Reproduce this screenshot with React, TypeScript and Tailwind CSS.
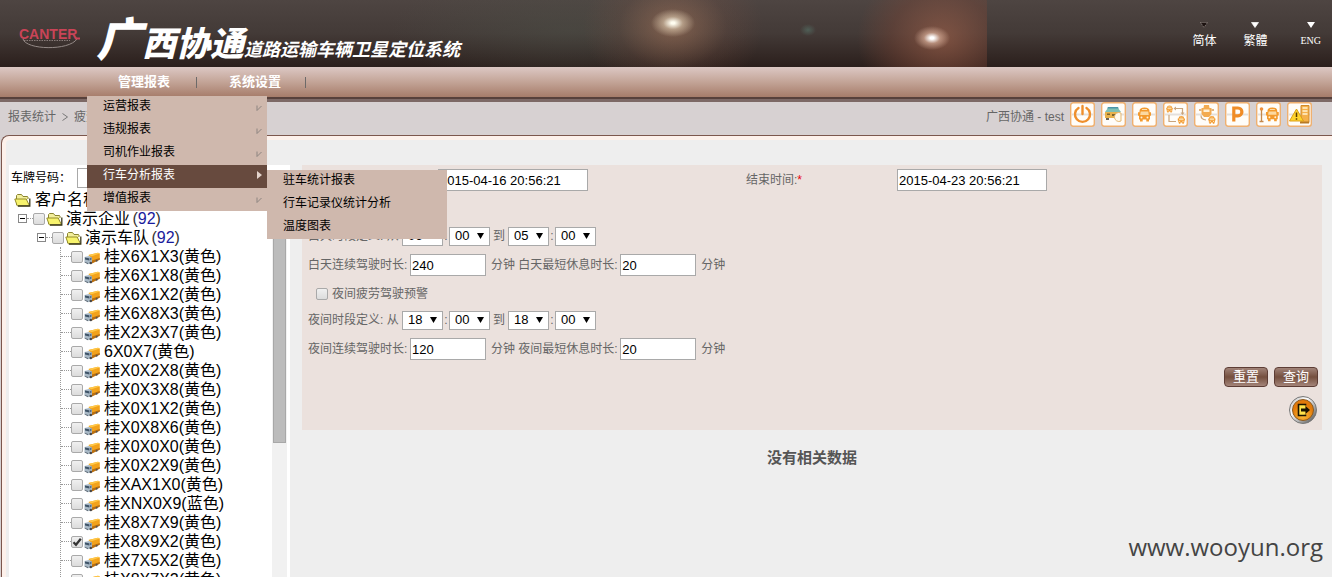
import React from "react";

const vehicles = [
  "桂X6X1X3(黄色)",
  "桂X6X1X8(黄色)",
  "桂X6X1X2(黄色)",
  "桂X6X8X3(黄色)",
  "桂X2X3X7(黄色)",
  "6X0X7(黄色)",
  "桂X0X2X8(黄色)",
  "桂X0X3X8(黄色)",
  "桂X0X1X2(黄色)",
  "桂X0X8X6(黄色)",
  "桂X0X0X0(黄色)",
  "桂X0X2X9(黄色)",
  "桂XAX1X0(黄色)",
  "桂XNX0X9(蓝色)",
  "桂X8X7X9(黄色)",
  "桂X8X9X2(黄色)",
  "桂X7X5X2(黄色)",
  "桂X8X7X2(黄色)",
];

const menuItems = ["运营报表", "违规报表", "司机作业报表", "行车分析报表", "增值报表"];
const subItems = ["驻车统计报表", "行车记录仪统计分析", "温度图表"];

function Check({ label, checked = false }: { label: string; checked?: boolean }) {
  return (
    <span className="relative flex size-3 shrink-0">
      <input
        type="checkbox"
        aria-label={label}
        defaultChecked={checked}
        className="peer size-3 appearance-none rounded-xs border border-[#a9a9a9] bg-linear-to-b from-[#f0f0f0] to-[#dcdcdc]"
      />
      <svg
        viewBox="0 0 12 12"
        className="pointer-events-none absolute inset-0 hidden size-3 peer-checked:block"
      >
        <path d="M2.5 6.2 5 8.8 9.8 2.8" fill="none" stroke="#333" strokeWidth="2.2" />
      </svg>
    </span>
  );
}

function Folder() {
  return (
    <svg viewBox="0 0 17 14" className="h-[14px] w-[17px] shrink-0">
      <path d="M2.5 12V2.5l1-1h4l1.5 2h4.500l.5.5V6" fill="#f3ef9c" stroke="#8a8430" />
      <path d="M.8 6h11.400L15.500 12.800H3.200z" fill="#f7f36c" stroke="#948c2a" />
      <path d="M15.800 5.500v7.500H4" fill="none" stroke="#3c3a1c" strokeWidth="1.300" />
    </svg>
  );
}

function Truck() {
  return (
    <svg viewBox="0 0 16 13" className="h-[13px] w-4 shrink-0">
      <path d="M4.500 3 14 .8l1.800.8v5.600L8 11 6 5z" fill="#f2a21c" />
      <path d="M4.500 3 14 .8l1.800.8L7.500 4.200z" fill="#ffc848" />
      <path d="M8 8.500 15.800 6v1.800L8 11.500z" fill="#b86e10" />
      <path d="M.5 5 5 4l3 1.400v5.600L4 12.200.5 10z" fill="#a9b9c6" />
      <path d="M1 5.600 5 6.200l.2 2.200L1 7.400z" fill="#3f5468" />
      <path d="m5.600 6.200 1.900-.6v2.200l-1.900.6z" fill="#5a6f82" />
      <path d="M.6 9.800 4 11v1.200L.6 10.600z" fill="#5f6b77" />
      <circle cx="6.800" cy="11" r="1.300" fill="#444" />
      <circle cx="12.600" cy="8.800" r="1" fill="#555" />
    </svg>
  );
}

function Toggle() {
  return (
    <button type="button" aria-label="折叠" className="size-[9px] shrink-0">
      <svg viewBox="0 0 9 9" className="size-[9px]">
        <rect x=".5" y=".5" width="8" height="8" fill="#fff" stroke="#888" />
        <path d="M2 4.500h5" stroke="#000" />
      </svg>
    </button>
  );
}

function Dots() {
  return <span className="w-[6px] shrink-0 border-t border-dotted border-[#999]" />;
}

function BusShape() {
  return (
    <>
      <path
        d="M2 3.500Q2 0 7 0t5 3.500v1.200h1.500v3.500H12.500V12h-1v2h-2.700v-2H5.200v2H2.500v-2h-1V8.200H.5V4.700H2z"
        fill="#f39a2e"
      />
      <path d="M4.500 1.500h5v1h-5z" fill="#fce0b4" />
      <path d="M3.200 4h7.600l.5 3.500H2.700z" fill="#fbd9a2" />
      <circle cx="4" cy="10" r="1" fill="#fff1d8" />
      <circle cx="10" cy="10" r="1" fill="#fff1d8" />
    </>
  );
}

const tools: { label: string; art: React.ReactNode }[] = [
  {
    label: "退出",
    art: (
      <g fill="none" stroke="#ef8f2c" strokeWidth="2.400" strokeLinecap="round">
        <path d="M8.500 6a7.500 7.500 0 1 0 8 0" />
        <path d="M12.500 4v8" />
      </g>
    ),
  },
  {
    label: "车辆查询",
    art: (
      <>
        <path d="m4 10 3-4h10l3 4z" fill="#7fc0b4" />
        <path d="M7 5h10l.8 1.500H6z" fill="#4a94a8" />
        <path d="M4 10h15v6H4z" fill="#e8b24c" />
        <path d="M6 11.500h3v1.500H6zM11 12h4v2h-4z" fill="#7a662f" />
        <path d="M5 16h3v2H5z" fill="#6b6455" />
        <path d="M20 11a4.500 4.500 0 1 0 0 8z" fill="#fff9ea" stroke="#e3b774" />
      </>
    ),
  },
  { label: "车辆", art: <g transform="translate(5.500 5.500)"><BusShape /></g> },
  {
    label: "线路",
    art: (
      <>
        <g transform="translate(3 3.500) scale(.5)"><BusShape /></g>
        <g transform="translate(14.500 14) scale(.55)"><BusShape /></g>
        <path d="M12 6.500h7.500V11M6 13v6.500h7" fill="none" stroke="#c9a47c" strokeWidth="1.200" />
        <path d="m17.500 10.500 2 2.500 2-2.500zM10.500 6.500l2.500-2v4z" fill="#c9a47c" />
      </>
    ),
  },
  {
    label: "跟踪",
    art: (
      <>
        <path d="M10 3h5l.5 3h2v6l-2.500 3h-5L7.500 12V6h2z" fill="#f3ab50" />
        <path d="M9.500 7.500h6V10h-6z" fill="#fff0d6" />
        <path d="M5 8h2.500M17.500 8H20" stroke="#d89a55" strokeWidth="1.500" />
        <path d="M7 13.500q0 4 5 4.500" fill="none" stroke="#c9a47c" strokeWidth="1.200" />
        <g transform="translate(14 14) scale(.55)"><BusShape /></g>
      </>
    ),
  },
  {
    label: "停车",
    art: (
      <path
        d="M8.800 19.500V6h4.200a3.900 3.900 0 0 1 0 7.800H8.800"
        fill="none"
        stroke="#f08c26"
        strokeWidth="3.200"
      />
    ),
  },
  {
    label: "站点",
    art: (
      <>
        <g transform="translate(9.500 5.500) scale(.98)"><BusShape /></g>
        <circle cx="5.500" cy="7" r="1.800" fill="#ef8f3c" />
        <path d="M5.500 8v11M3.500 19.500h4" stroke="#c4884c" strokeWidth="1.300" />
      </>
    ),
  },
  {
    label: "报警",
    art: (
      <>
        <path d="M14 3.500h8v17h-8z" fill="#f5b14a" stroke="#cf8a2c" />
        <path d="M15.500 6h5M15.500 9h5M15.500 12h5" stroke="#fff2cf" strokeWidth="1.400" />
        <path d="M13 19.500h9v2h-9z" fill="#b87a26" />
        <path d="M9.500 7 16.500 19h-14z" fill="#ffd42c" stroke="#dba018" />
        <path d="M9.500 10.500v4.500M9.500 16.200v1.600" stroke="#5b3b00" strokeWidth="1.500" />
      </>
    ),
  },
];

function ToolButton({ label, art }: { label: string; art: React.ReactNode }) {
  return (
    <button type="button" aria-label={label} className="size-[25px]">
      <svg viewBox="0 0 25 25" className="size-[25px]">
        <rect x=".7" y=".7" width="23.600" height="23.600" rx="2.500" fill="#fffdf9" stroke="#efb070" strokeWidth="1.400" />
        <path d="M2 12.500h21" stroke="#e4e0dc" strokeWidth="2" />
        {art}
      </svg>
    </button>
  );
}

function Time({ value, label }: { value: string; label: string }) {
  return (
    <span className="relative flex">
      <select
        aria-label={label}
        defaultValue={value}
        className="h-[19px] w-[41px] appearance-none border border-[#a9a9a9] bg-white pl-[5px] text-[13px] leading-4 text-black"
      >
        <option>{value}</option>
      </select>
      <svg viewBox="0 0 7 6" className="pointer-events-none absolute top-[6px] right-[6px] h-[6px] w-[7px]">
        <path d="M0 0h7L3.500 6z" fill="#000" />
      </svg>
    </span>
  );
}

function TimeRange({ title, values }: { title: string; values: string[] }) {
  return (
    <div className="flex h-[26px] items-center">
      <span className="w-[94px] whitespace-nowrap">{title} 从</span>
      <Time value={values[0]} label={title + "起始小时"} />
      <span className="w-[6px] text-center">:</span>
      <Time value={values[1]} label={title + "起始分钟"} />
      <span className="w-[18px] text-center">到</span>
      <Time value={values[2]} label={title + "结束小时"} />
      <span className="w-[6px] text-center">:</span>
      <Time value={values[3]} label={title + "结束分钟"} />
    </div>
  );
}

const field = "h-[22px] border border-[#a9a9a9] bg-white px-px text-[13px] text-black";

function Durations({ id, part, drive, rest }: { id: string; part: string; drive: string; rest: string }) {
  return (
    <div className="flex h-8 items-center whitespace-nowrap">
      <label htmlFor={id + "-drive"} className="w-[102px]">{part}连续驾驶时长:</label>
      <input id={id + "-drive"} defaultValue={drive} className={field + " w-[76px]"} />
      <span className="ml-[5px]">分钟&nbsp;</span>
      <label htmlFor={id + "-rest"} className="w-[102px]">{part}最短休息时长:</label>
      <input id={id + "-rest"} defaultValue={rest} className={field + " w-[76px]"} />
      <span className="ml-[5px]">分钟</span>
    </div>
  );
}

function Warning({ text }: { text: string }) {
  return (
    <label className="flex h-[26px] items-center gap-1 pl-2">
      <Check label={text} />
      {text}
    </label>
  );
}

function Arrow({ active }: { active: boolean }) {
  return active ? (
    <svg viewBox="0 0 5 8" className="h-2 w-[5px]">
      <path d="M0 0 5 4 0 8z" fill="#e3d3cb" />
    </svg>
  ) : (
    <svg viewBox="0 0 6 6" className="mt-1 h-[6px] w-[6px]">
      <path d="M1 .5V5.500L5.500 1" fill="none" stroke="#8d8480" />
    </svg>
  );
}

function Menu() {
  return (
    <div className="absolute top-[29px] left-[-31px] z-20 w-[180px] bg-[#cfb8ad] text-xs font-normal text-black">
      {menuItems.map((item, i) => {
        const active = i === 3;
        return (
          <div key={item} className="relative">
            <a
              href="#"
              className={
                "flex h-[23px] items-center justify-between pr-[5px] pb-[3px] pl-4 " +
                (active ? "bg-[#674a3e] text-white" : "")
              }
            >
              {item}
              <Arrow active={active} />
            </a>
            {active && (
              <div className="absolute top-[5px] left-full w-[180px] bg-[#cfb8ad]">
                {subItems.map((s) => (
                  <a key={s} href="#" className="flex h-[23px] items-center pb-[3px] pl-4">
                    {s}
                  </a>
                ))}
              </div>
            )}
          </div>
        );
      })}
    </div>
  );
}

function Lang({ text, current = false }: { text: string; current?: boolean }) {
  return (
    <a href="#" className="flex flex-col items-center gap-1 text-xs leading-[18px] text-white">
      <svg viewBox="0 0 8 6" className="h-[6px] w-2">
        <path
          d="M.5.500h7L4 5.500z"
          fill={current ? "#1c1210" : "#fff"}
          stroke={current ? "#b7aca8" : "#fff"}
          strokeWidth=".7"
          strokeDasharray={current ? "1 1" : undefined}
        />
      </svg>
      {text}
    </a>
  );
}

function Header() {
  return (
    <header className="relative flex h-[67px] shrink-0 justify-between bg-linear-to-b from-[#4e4542] via-[#433a37] to-[#2b1f1c]">
      <div className="absolute inset-y-0 left-[380px] w-[607px] bg-[radial-gradient(ellipse_22px_14px_at_293px_23px,#fffdf0_8%,#d9c6ac99_45%,transparent),radial-gradient(ellipse_18px_12px_at_552px_38px,#ffffff_10%,#e0b8a399_45%,transparent),radial-gradient(ellipse_8px_6px_at_428px_30px,#56756a99,transparent),radial-gradient(ellipse_90px_70px_at_293px_27px,#a8765b99,#80524333_60%,transparent),radial-gradient(ellipse_85px_75px_at_562px_38px,#a8654c99,#7c463666_60%,transparent),radial-gradient(ellipse_180px_60px_at_190px_30px,#4f554b66,transparent)]" />
      <div className="relative flex items-start">
        <svg viewBox="0 0 66 26" className="mt-[25px] ml-[18px] h-[26px] w-[66px]">
          <path d="M5 14c3 11 46 12 54 0" fill="none" stroke="#948a87" />
          <text x="1" y="13.500" fontFamily="Liberation Sans, sans-serif" fontWeight="bold" fontSize="14" fill="#c94457">CANTER</text>
          <path d="M6 15.500h46" stroke="#9c8e8b" strokeDasharray="1.500 1" strokeWidth=".8" />
          <path d="M57 13.500h5" stroke="#c94457" strokeWidth="2" />
        </svg>
        <h1 className="ml-3 flex h-[67px] items-baseline font-['Noto_Sans_CJK_SC',sans-serif] font-black whitespace-nowrap text-white italic">
          <span className="text-[46px] leading-[72px]">广</span>
          <span className="text-[34px] leading-[60px]">西协通</span>
          <span className="text-[18px] leading-6 font-bold">道路运输车辆卫星定位系统</span>
        </h1>
      </div>
      <div className="relative flex items-start gap-[27px] pt-[22px] pr-[11px]">
        <Lang text="简体" current />
        <Lang text="繁體" />
        <span className="ml-[6px] font-['Liberation_Serif',serif]">
          <a href="#" className="flex flex-col items-center gap-1 text-[10px] leading-[18px] text-white">
            <svg viewBox="0 0 8 6" className="h-[6px] w-2">
              <path d="M0 0h8L4 6z" fill="#fff" />
            </svg>
            ENG
          </a>
        </span>
      </div>
    </header>
  );
}

function Tree() {
  return (
    <aside className="flex w-[281px] shrink-0 bg-white">
      <div className="flex min-w-0 flex-1 flex-col overflow-hidden whitespace-nowrap">
        <div className="flex h-[25px] shrink-0 items-center pl-[2px] text-xs text-black">
          <label htmlFor="plate" className="w-[66px]">车牌号码：</label>
          <input id="plate" className="h-5 w-[150px] border border-[#a9a9a9] bg-white" />
        </div>
        <div className="text-base text-black">
          <div className="flex h-[19px] items-center gap-1 pl-[5px]">
            <Folder />
            <span>客户名称</span>
          </div>
          <div className="flex h-[19px] items-center pl-[9px]">
            <Toggle />
            <Dots />
            <Check label="演示企业" />
            <span className="mr-[3px] ml-px flex"><Folder /></span>
            <span>演示企业 <span className="-ml-[2px] text-[#1a1a9c]"><span className="text-[#333]">(</span>92<span className="text-[#333]">)</span></span></span>
          </div>
          <div className="flex h-[19px] items-center pl-[28px]">
            <Toggle />
            <Dots />
            <Check label="演示车队" />
            <span className="mr-[3px] ml-px flex"><Folder /></span>
            <span>演示车队 <span className="-ml-[2px] text-[#1a1a9c]"><span className="text-[#333]">(</span>92<span className="text-[#333]">)</span></span></span>
          </div>
          <ul className="ml-[51px] border-l border-dotted border-[#999]">
            {vehicles.map((v) => (
              <li key={v} className="flex h-[19px] items-center">
                <span className="w-[10px] border-t border-dotted border-[#999]" />
                <Check label={v} checked={v === "桂X8X9X2(黄色)"} />
                <span className="mt-[3px] mr-1 ml-px flex"><Truck /></span>
                <span>{v}</span>
              </li>
            ))}
          </ul>
        </div>
      </div>
      <div className="mt-[25px] mr-[3px] w-[15px] shrink-0 bg-[#f1f1f1] px-px">
        <div className="h-[253px] border border-[#a8a8a8] bg-[#bcbcbc]" />
      </div>
    </aside>
  );
}

function ActionButton({ children }: { children: string }) {
  return (
    <button
      type="button"
      className="h-5 w-11 rounded-sm border border-[#5d3d35] bg-linear-to-b from-[#a18378] via-[#75503f] to-[#a4857a] text-[13px] leading-4 text-white"
    >
      {children}
    </button>
  );
}

function Query() {
  return (
    <form className="flex h-[265px] flex-col bg-[#ebe1dd] pl-[6px] text-xs text-[#666]">
      <div className="grid h-[30px] grid-cols-[130px_308px_151px_1fr] items-center">
        <label htmlFor="start">开始时间:<span className="text-red-600">*</span></label>
        <input id="start" defaultValue="2015-04-16 20:56:21" className={field + " w-[150px]"} />
        <label htmlFor="end">结束时间:<span className="text-red-600">*</span></label>
        <input id="end" defaultValue="2015-04-23 20:56:21" className={field + " w-[150px]"} />
      </div>
      <div className="mt-[2px] flex flex-col">
        <Warning text="白天疲劳驾驶预警" />
        <TimeRange title="白天时段定义:" values={["06", "00", "05", "00"]} />
        <Durations id="day" part="白天" drive="240" rest="20" />
        <Warning text="夜间疲劳驾驶预警" />
        <TimeRange title="夜间时段定义:" values={["18", "00", "18", "00"]} />
        <Durations id="night" part="夜间" drive="120" rest="20" />
      </div>
      <div className="mt-[2px] flex justify-end gap-[6px] pr-1">
        <ActionButton>重置</ActionButton>
        <ActionButton>查询</ActionButton>
      </div>
      <div className="mt-2 flex justify-end pr-1">
        <button type="button" aria-label="导出" className="size-[30px]">
          <svg viewBox="0 0 30 30" className="size-[30px]">
            <defs>
              <linearGradient id="rim" x1="0" y1="0" x2="1" y2="1">
                <stop offset="0" stopColor="#aaa" />
                <stop offset=".35" stopColor="#fff" />
                <stop offset="1" stopColor="#444" />
              </linearGradient>
              <radialGradient id="face" cy=".75">
                <stop offset="0" stopColor="#ffc13a" />
                <stop offset="1" stopColor="#e27a0a" />
              </radialGradient>
            </defs>
            <circle cx="15" cy="15" r="13.500" fill="url(#rim)" stroke="#777" />
            <circle cx="15" cy="15" r="10.500" fill="url(#face)" stroke="#8b5a20" />
            <path d="M17.500 10.500V9.500h-7v11h7v-1" fill="#ffe34a" stroke="#1b1400" strokeWidth="1.600" />
            <path d="M13 13.500h4.500V11l4.500 4-4.500 4v-2.500H13z" fill="#1b1400" />
          </svg>
        </button>
      </div>
    </form>
  );
}

export default function App() {
  return (
    <div className="relative flex h-screen flex-col overflow-hidden bg-[#d7d1d2] font-['Liberation_Sans','Noto_Sans_CJK_SC',sans-serif]">
      <Header />
      <nav className="flex h-[30px] shrink-0 items-center bg-linear-to-b from-[#dcc8c4] via-[#c3a497] to-[#a67c6a] pl-[118px] text-[13px] font-bold text-white">
        <div className="relative flex h-[30px] items-center">
          <a href="#">管理报表</a>
          <Menu />
        </div>
        <span className="ml-[26px] h-[11px] w-px bg-[#6d6a69]" />
        <a href="#" className="ml-8">系统设置</a>
        <span className="ml-6 h-[11px] w-px bg-[#6d6a69]" />
      </nav>
      <div className="h-[5px] shrink-0 border-t-2 border-[#57403b] bg-[#7d6966]" />
      <div className="flex h-[33px] shrink-0 items-start justify-between pr-5 pl-2 text-xs text-[#666]">
        <div className="flex items-center gap-[6px] pt-[7px]">
          <span>报表统计</span>
          <svg viewBox="0 0 6 8" className="h-2 w-[6px]">
            <path d="m.5.500 5 3.500-5 3.500" fill="none" stroke="#777" />
          </svg>
          <span>疲劳驾驶</span>
        </div>
        <div className="flex gap-[6px]">
          <span className="pt-[7px]">广西协通 - test</span>
          {tools.map((t) => (
            <ToolButton key={t.label} label={t.label} art={t.art} />
          ))}
        </div>
      </div>
      <main className="ml-px flex min-h-0 flex-1 flex-col rounded-tl-lg border-t border-l border-[#7c574d] bg-[#fdf1eb] pt-1 pl-1">
        <div className="flex min-h-0 flex-1 rounded-tl-sm bg-[#eee] pt-[25px] pl-[3px]">
          <Tree />
          <section className="min-w-0 flex-1 pr-[10px] pl-3">
            <Query />
            <p className="pt-[17px] text-center text-[15px] leading-[22px] font-bold text-[#555]">没有相关数据</p>
          </section>
        </div>
      </main>
      <div className="absolute right-[9px] bottom-[14px] font-['Open_Sans',sans-serif] text-2xl leading-8 text-[#444]">
        www.wooyun.org
      </div>
    </div>
  );
}
